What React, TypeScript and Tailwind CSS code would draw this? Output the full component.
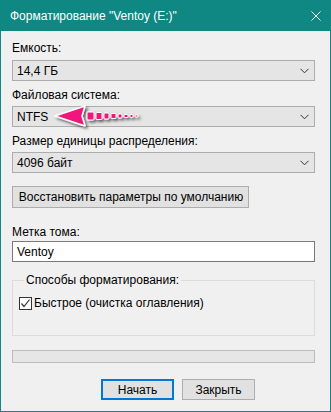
import type { ReactNode } from "react";

const font = "font-['Segoe_UI','Liberation_Sans',sans-serif]";

function Label({ children, className = "" }: { children: ReactNode; className?: string }) {
  return <div className={`h-4 text-[12px] leading-4 text-[#000] ${className}`}>{children}</div>;
}

function Chevron() {
  return (
    <svg width="9" height="6" viewBox="0 0 9 6" className="shrink-0">
      <path d="M0.5 0.8 L4.5 4.8 L8.5 0.8" fill="none" stroke="#333" strokeWidth="1" />
    </svg>
  );
}

function Combo({ value, className = "" }: { value: string; className?: string }) {
  return (
    <div
      className={`flex h-[21px] w-[303px] items-center justify-between border border-[#adadad] bg-[#e5e5e5] pl-[4px] pr-[5px] text-[12px] leading-4 ${className}`}
    >
      <span>{value}</span>
      <Chevron />
    </div>
  );
}

function Button({ children, primary, className = "" }: { children: ReactNode; primary?: boolean; className?: string }) {
  return (
    <div
      className={`flex h-[21px] items-center justify-center whitespace-nowrap bg-[#e1e1e1] text-[12px] leading-4 ${
        primary ? "border-2 border-[#0078d7]" : "border border-[#adadad]"
      } ${className}`}
    >
      {children}
    </div>
  );
}

function Arrow() {
  const dashes = [
    { x: 87, w: 7, h: 8 },
    { x: 96, w: 6, h: 7 },
    { x: 104, w: 5, h: 6 },
    { x: 111, w: 5, h: 5 },
    { x: 118, w: 4, h: 4 },
    { x: 124, w: 4, h: 3 },
    { x: 130, w: 3, h: 3 },
    { x: 135, w: 3, h: 2 },
  ];
  return (
    <svg
      className="pointer-events-none absolute left-0 top-0"
      width="331"
      height="412"
      viewBox="0 0 331 412"
    >
      <defs>
        <filter id="sh" x="-20%" y="-40%" width="140%" height="200%">
          <feDropShadow dx="2" dy="2" stdDeviation="1.5" floodColor="#000" floodOpacity="0.6" />
        </filter>
      </defs>
      <g filter="url(#sh)">
        <polygon points="55,116 85,106 82,116 85,126" fill="#f0187c" stroke="#fff" strokeWidth="1.5" strokeLinejoin="round" />
        {dashes.map((d) => (
          <rect
            key={d.x}
            x={d.x}
            y={116 - d.h / 2}
            width={d.w}
            height={d.h}
            rx="1"
            fill="#f0187c"
            stroke="#fff"
            strokeWidth="1"
          />
        ))}
      </g>
    </svg>
  );
}

export default function App() {
  return (
    <div className={`relative h-[412px] w-[331px] overflow-hidden bg-[#f0f0f0] text-black ${font}`}>
      <div className="flex h-[31px] items-center justify-between bg-[#0f8782] pl-[10px] pr-[10px] text-white">
        <span className="text-[12px] leading-4">Форматирование "Ventoy (E:)"</span>
        <svg width="10" height="10" viewBox="0 0 10 10">
          <path d="M0.5 0.5 L9.5 9.5 M9.5 0.5 L0.5 9.5" stroke="#fff" strokeWidth="1" />
        </svg>
      </div>

      <div className="flex h-[381px] flex-col border-x border-b border-[#0f8782] pl-[11px]">
        <Label className="mt-[9px]">Емкость:</Label>
        <Combo value="14,4 ГБ" className="mt-[4px]" />

        <Label className="mt-[6px]">Файловая система:</Label>
        <Combo value="NTFS" className="mt-[3px]" />

        <Label className="mt-[6px]">Размер единицы распределения:</Label>
        <Combo value="4096 байт" className="mt-[3px]" />

        <Button className="mt-[13px] h-[22px] w-[237px] pl-[1px]">
          Восстановить параметры по умолчанию
        </Button>

        <Label className="mt-[16px]">Метка тома:</Label>
        <div className="mt-[1px] flex h-[21px] w-[303px] items-center border border-[#7a7a7a] bg-white pl-[4px] text-[12px] leading-4">
          Ventoy
        </div>

        <fieldset className="mt-[10px] h-[64px] w-[303px] border border-[#dcdcdc] pl-[6px]">
          <legend className="ml-[5px] h-4 px-[2px] text-[12px] leading-4">Способы форматирования:</legend>
          <div className="mt-[7px] flex items-center gap-[2px] text-[12px] leading-4">
            <div className="flex h-[13px] w-[13px] items-center justify-center border border-[#333] bg-white">
              <svg width="11" height="11" viewBox="0 0 11 11">
                <path d="M1.5 5.5 L4 8.5 L9.5 1.5" fill="none" stroke="#333" strokeWidth="1.2" />
              </svg>
            </div>
            <span>Быстрое (очистка оглавления)</span>
          </div>
        </fieldset>

        <div className="mt-[14px] h-[13px] w-[303px] border border-[#bcbcbc] bg-[#e6e6e6]" />

        <div className="mt-[16px] flex gap-[8px] pl-[89px]">
          <Button primary className="w-[73px]">
            Начать
          </Button>
          <Button className="w-[73px]">Закрыть</Button>
        </div>
      </div>

      <Arrow />
    </div>
  );
}
